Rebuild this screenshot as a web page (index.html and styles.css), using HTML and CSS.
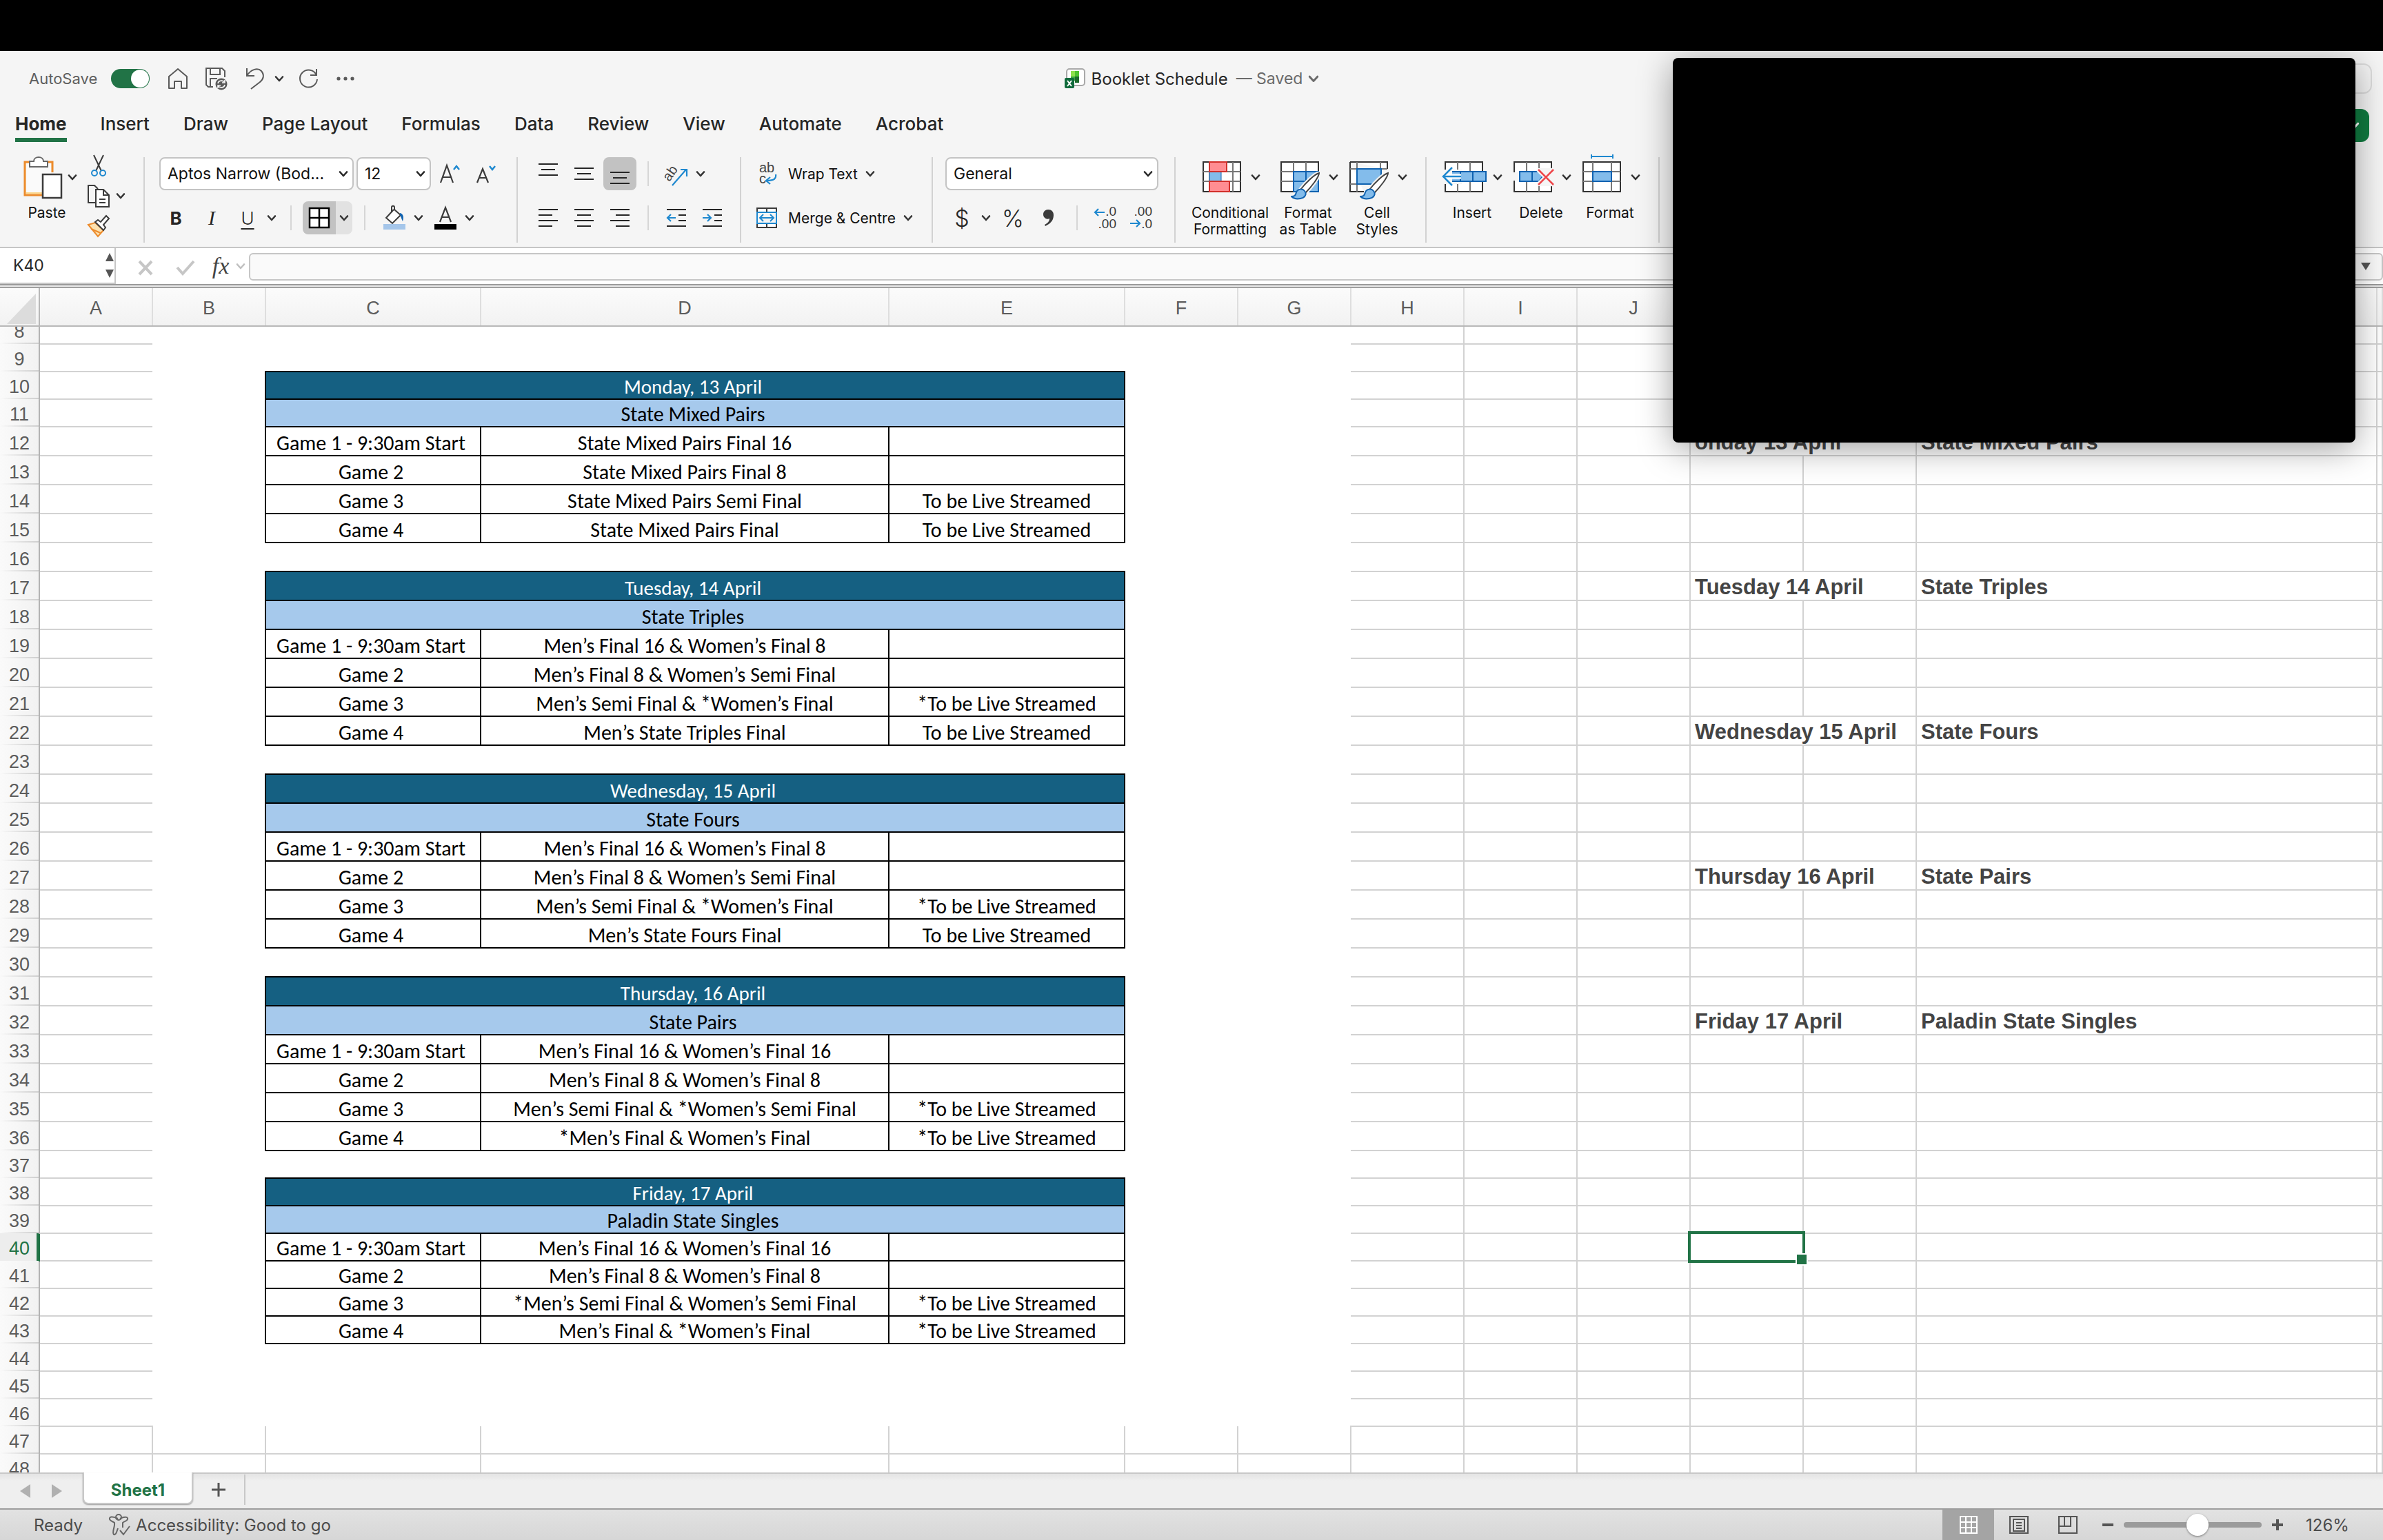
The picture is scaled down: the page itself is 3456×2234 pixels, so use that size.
FILE: index.html
```html
<!DOCTYPE html>
<html lang="en-AU">
<head>
<meta charset="utf-8">
<title>Booklet Schedule</title>
<link rel="stylesheet" href="styles.css">
</head>
<body>
<svg class="defs" aria-hidden="true">
  <symbol id="chev" viewBox="0 0 14 14"><path d="M2 4.5l5 5.5 5-5.5" fill="none" stroke="currentColor" stroke-width="2.6" stroke-linecap="round" stroke-linejoin="round"/></symbol>
  <symbol id="brush" viewBox="0 0 44 42">
    <path d="M41 2C34 4 21 17 15 25l6 6C29 23 41 8 41 2z" fill="#fff" stroke="#f5f5f5" stroke-width="6"/>
    <path d="M41 2C34 4 21 17 15 25l6 6C29 23 41 8 41 2z" fill="#fff" stroke="#444" stroke-width="2"/>
    <path d="M1 36c5 0 6-2 7-6 2-5 9-6 12-2 4 5 0 10-6 11-5 1-10 0-13-3z" fill="#83bceb" stroke="#0f62b0" stroke-width="2"/>
  </symbol>
</svg>
<div class="menubar"></div>

<header class="titlebar">
  <div class="quick">
    <label class="autosave">AutoSave <input type="checkbox" class="toggle" checked></label>
    <button class="qb" aria-label="Home"><svg width="30" height="32" viewBox="0 0 30 32"><path d="M2 13L15 2l13 11v17h-8V20H10v10H2z" fill="none" stroke="#5a5a5a" stroke-width="2" stroke-linejoin="round"/></svg></button>
    <button class="qb" aria-label="Save"><svg width="34" height="34" viewBox="0 0 34 34"><path d="M12 29H5l-3-3V2h23l4 4v9M8 2v9h14V2M8 29V17h10" fill="none" stroke="#5a5a5a" stroke-width="2"/><circle cx="24" cy="25" r="8.500" fill="#5a5a5a"/><path d="M19 24c1-5 8-5 10-1m0-4v4h-4M29 26c-1 5-8 5-10 1m0 4v-4h4" fill="none" stroke="#f5f5f5" stroke-width="1.600"/></svg></button>
    <button class="qb" aria-label="Undo"><svg width="30" height="34" viewBox="0 0 30 34"><path d="M3 2v11h11M3 13C9 3 19 1 24 6c5 6 3 12-2 16L9 32" fill="none" stroke="#5a5a5a" stroke-width="2"/></svg></button>
    <button class="cv" aria-label="Undo history"><svg width="14" height="14"><use href="#chev"/></svg></button>
    <button class="qb redo" aria-label="Redo"><svg width="30" height="32" viewBox="0 0 30 32"><path d="M27 2v9h-9M27 11A12.500 12.500 0 1 0 28 17" fill="none" stroke="#5a5a5a" stroke-width="2"/></svg></button>
    <button class="qb dots" aria-label="More"><svg width="28" height="8" viewBox="0 0 28 8"><g fill="#5a5a5a"><circle cx="4" cy="4" r="2.600"/><circle cx="14" cy="4" r="2.600"/><circle cx="24" cy="4" r="2.600"/></g></svg></button>
  </div>
  <button class="doc">
    <svg width="32" height="30" viewBox="0 0 32 30"><rect x="4" y="1" width="26" height="24" rx="4" fill="#fff" stroke="#a9a9a9" stroke-width="2"/><path d="M10 4h12v8H10z" fill="#8ee04e"/><path d="M16 4h6v8h-6z" fill="#4fc332"/><path d="M16 12h6v9h-6z" fill="#1c6b2c"/><path d="M10 12h6v6h-6z" fill="#3aa642"/><rect x="1" y="14" width="14" height="15" rx="2" fill="#0f6a3b"/><path d="M5 18l6 8M11 18l-6 8" stroke="#fff" stroke-width="2"/></svg>
    <span>Booklet Schedule</span><span class="saved">— Saved</span>
    <svg class="saved" width="16" height="16"><use href="#chev"/></svg>
  </button>
  <div class="right"><button class="search" aria-label="Search"></button></div>
</header>

<nav class="tabs">
  <button class="tab on">Home</button><button class="tab">Insert</button><button class="tab">Draw</button><button class="tab">Page Layout</button><button class="tab">Formulas</button><button class="tab">Data</button><button class="tab">Review</button><button class="tab">View</button><button class="tab">Automate</button><button class="tab">Acrobat</button>
  <button class="share" aria-label="Share"><svg width="16" height="16"><use href="#chev"/></svg></button>
</nav>

<section class="ribbon">
  <div class="group clip">
    <button class="big paste">
      <span class="pic"><svg width="64" height="70" viewBox="0 0 64 70"><path d="M22 13H11v48h26" fill="#fdf3d8" stroke="#ec8b2c" stroke-width="3"/><path d="M13 57h24" stroke="#fbd58a" stroke-width="4"/><path d="M40 13h11v15" fill="none" stroke="#ec8b2c" stroke-width="3"/><path d="M13 15h36v15H37v27H13z" fill="#fafafa"/><path d="M18 20V12h6c0-8 14-8 14 0h6v8z" fill="#fff" stroke="#666" stroke-width="2"/><rect x="37" y="31" width="27" height="34" fill="#fff" stroke="#3b3b3b" stroke-width="2.500"/></svg><svg class="c" width="14" height="14"><use href="#chev"/></svg></span>
      <span class="cap">Paste</span>
    </button>
    <div class="smallcol">
      <button aria-label="Cut"><svg width="34" height="34" viewBox="0 0 34 34"><path d="M10 2l11 23M24 2L13 25" stroke="#3b3b3b" stroke-width="2"/><circle cx="11" cy="28" r="4" fill="none" stroke="#1e88cf" stroke-width="2"/><circle cx="23" cy="28" r="4" fill="none" stroke="#1e88cf" stroke-width="2"/></svg></button>
      <button aria-label="Copy"><svg width="34" height="34" viewBox="0 0 34 34"><path d="M12 27H2V2h9l5 5" fill="none" stroke="#3b3b3b" stroke-width="2"/><path d="M13 8h11l8 8v17H13zM24 8v8h8M18 22h9M18 27h9" fill="#fff" stroke="#3b3b3b" stroke-width="2"/></svg><svg class="c" width="14" height="14"><use href="#chev"/></svg></button>
      <button aria-label="Format painter"><svg width="34" height="34" viewBox="0 0 34 34"><path d="M2 15l10-3 12 11-8 9z" fill="#fde2b0" stroke="#ec8b2c" stroke-width="2"/><path d="M6 21l14 6" stroke="#ec8b2c" stroke-width="2"/><path d="M12 11l4-3 4 3 8-9 4 4-8 9 3 4-3 4z" fill="#fff" stroke="#3b3b3b" stroke-width="2"/></svg></button>
    </div>
  </div>
  <i class="sep"></i>

  <div class="group rows font">
    <div class="row">
      <label class="combo name"><select aria-label="Font"><option>Aptos Narrow (Bod...</option></select><svg width="14" height="14"><use href="#chev"/></svg></label>
      <label class="combo size"><select aria-label="Font size"><option>12</option></select><svg width="14" height="14"><use href="#chev"/></svg></label>
      <button class="ib" aria-label="Increase font size"><svg width="34" height="34" viewBox="0 0 34 34"><path d="M3 30L12 5l9 25M6 22h12" fill="none" stroke="#3b3b3b" stroke-width="2.200"/><path d="M22 11l4-5 4 5" fill="none" stroke="#1e88cf" stroke-width="2.500"/></svg></button>
      <button class="ib" aria-label="Decrease font size"><svg width="34" height="34" viewBox="0 0 34 34"><path d="M4 30l8-20 8 20M7 23h10" fill="none" stroke="#3b3b3b" stroke-width="2.200"/><path d="M22 6l4 5 4-5" fill="none" stroke="#1e88cf" stroke-width="2.500"/></svg></button>
    </div>
    <div class="row">
      <button class="ib bold">B</button><button class="ib ital">I</button><button class="ib und">U</button><button class="cv" aria-label="Underline options"><svg width="14" height="14"><use href="#chev"/></svg></button>
      <i class="ss"></i>
      <button class="ib on join" aria-label="Borders"><svg width="32" height="32" viewBox="0 0 32 32"><path d="M2 2h28v28H2zM16 2v28M2 16h28" fill="#fff" stroke="#000" stroke-width="2.500"/></svg></button><button class="cv half" aria-label="Border options"><svg width="14" height="14"><use href="#chev"/></svg></button>
      <i class="ss"></i>
      <button class="ib" aria-label="Fill colour"><svg width="34" height="34" viewBox="0 0 34 34"><path d="M16 5l-11 12 9 8 12-12-9-8v-3c0-3-4-3-4 0v7" fill="#fff" stroke="#3b3b3b" stroke-width="2"/><path d="M25 10c5 1 6 6 4 12-2-3-2-7-4-9z" fill="#0f62b0"/><path d="M1 26h32v8H1z" fill="#a5c6ea"/></svg></button><button class="cv" aria-label="Fill options"><svg width="14" height="14"><use href="#chev"/></svg></button>
      <button class="ib" aria-label="Font colour"><svg width="34" height="34" viewBox="0 0 34 34"><path d="M9 23l8-21 8 21M12 16h10" fill="none" stroke="#3b3b3b" stroke-width="2.200"/><path d="M1 26h32v8H1z"/></svg></button><button class="cv" aria-label="Font colour options"><svg width="14" height="14"><use href="#chev"/></svg></button>
    </div>
  </div>
  <i class="sep"></i>

  <div class="group rows align">
    <div class="row">
      <button class="ib" aria-label="Top align"><svg width="28" height="32" viewBox="0 0 28 32"><path d="M0 2h28M4 10h20M0 18h28" stroke="#262626" stroke-width="2"/></svg></button>
      <button class="ib" aria-label="Middle align"><svg width="28" height="32" viewBox="0 0 28 32"><path d="M0 8h28M4 16h20M0 24h28" stroke="#262626" stroke-width="2"/></svg></button>
      <button class="ib on" aria-label="Bottom align"><svg width="28" height="32" viewBox="0 0 28 32"><path d="M0 14h28M4 22h20M0 30h28" stroke="#262626" stroke-width="2"/></svg></button>
      <i class="ss"></i>
      <button class="ib" aria-label="Orientation"><svg width="40" height="40" viewBox="-2 -3 40 40"><text x="2" y="26" transform="rotate(-55 8 22)" class="gl">ab</text><path d="M12 34L32 11M24 11h9v10" fill="none" stroke="#1e88cf" stroke-width="2.200"/></svg></button><button class="cv" aria-label="Orientation options"><svg width="14" height="14"><use href="#chev"/></svg></button>
    </div>
    <div class="row">
      <button class="ib" aria-label="Align left"><svg width="28" height="28" viewBox="0 0 28 28"><path d="M0 2h28M0 10h20M0 18h28M0 26h20" stroke="#262626" stroke-width="2"/></svg></button>
      <button class="ib" aria-label="Centre"><svg width="28" height="28" viewBox="0 0 28 28"><path d="M0 2h28M4 10h20M0 18h28M4 26h20" stroke="#262626" stroke-width="2"/></svg></button>
      <button class="ib" aria-label="Align right"><svg width="28" height="28" viewBox="0 0 28 28"><path d="M0 2h28M8 10h20M0 18h28M8 26h20" stroke="#262626" stroke-width="2"/></svg></button>
      <i class="ss"></i>
      <button class="ib" aria-label="Decrease indent"><svg width="28" height="28" viewBox="0 0 28 28"><path d="M0 2h28M17 10h11M17 18h11M0 26h28" stroke="#262626" stroke-width="2"/><path d="M13 14H1M6 9l-5 5 5 5" fill="none" stroke="#1e88cf" stroke-width="2.200"/></svg></button>
      <button class="ib" aria-label="Increase indent"><svg width="28" height="28" viewBox="0 0 28 28"><path d="M0 2h28M17 10h11M17 18h11M0 26h28" stroke="#262626" stroke-width="2"/><path d="M0 14h12M7 9l5 5-5 5" fill="none" stroke="#1e88cf" stroke-width="2.200"/></svg></button>
    </div>
  </div>
  <i class="sep"></i>

  <div class="group rows wrap">
    <div class="row">
      <button class="tb"><svg width="32" height="44" viewBox="0 -5 32 44"><text x="5" y="15" class="gl">ab</text><text x="5" y="31" class="gl">c</text><path d="M29 18c1 6-2 9-13 9M21 22l-6 5 6 5" fill="none" stroke="#1e88cf" stroke-width="2.200"/></svg><span>Wrap Text</span><svg class="c" width="14" height="14"><use href="#chev"/></svg></button>
    </div>
    <div class="row">
      <button class="tb"><svg width="32" height="32" viewBox="0 0 32 32"><path d="M2 8V2h28v6M2 24v6h28v-6M16 2v6M16 24v6" fill="#fff" stroke="#3b3b3b" stroke-width="2"/><path d="M2 8h28v16H2zM6 16h20M11 11l-5 5 5 5M21 11l5 5-5 5" fill="none" stroke="#1e88cf" stroke-width="2"/></svg><span>Merge &amp; Centre</span><svg class="c" width="14" height="14"><use href="#chev"/></svg></button>
    </div>
  </div>
  <i class="sep"></i>

  <div class="group rows number">
    <div class="row"><label class="combo fmt"><select aria-label="Number format"><option>General</option></select><svg width="14" height="14"><use href="#chev"/></svg></label></div>
    <div class="row">
      <button class="ib sym">$</button><button class="cv" aria-label="Currency options"><svg width="14" height="14"><use href="#chev"/></svg></button>
      <button class="ib sym">%</button>
      <button class="ib" aria-label="Comma style"><svg width="18" height="26" viewBox="0 0 18 26"><path d="M8 1c5 0 8 3 8 8 0 8-5 13-12 16l-1-2c5-3 7-5 7-9-4 2-9-1-9-6 0-4 3-7 7-7z" fill="#3b3b3b"/></svg></button>
      <i class="ss"></i>
      <button class="ib" aria-label="Increase decimals"><svg width="36" height="44" viewBox="0 -5 36 44"><text x="34" y="14" class="dg">.0</text><text x="34" y="32" class="dg">.00</text><path d="M17 9H3M8 4L3 9l5 5" fill="none" stroke="#1e88cf" stroke-width="2.200"/></svg></button>
      <button class="ib" aria-label="Decrease decimals"><svg width="36" height="44" viewBox="0 -5 36 44"><text x="34" y="14" class="dg">.00</text><text x="34" y="32" class="dg">.0</text><path d="M2 25h14M11 20l5 5-5 5" fill="none" stroke="#1e88cf" stroke-width="2.200"/></svg></button>
    </div>
  </div>
  <i class="sep"></i>

  <div class="group styles">
    <button class="big wide">
      <span class="pic"><svg width="64" height="70" viewBox="0 0 64 70"><path d="M4 13h54v43H4z" fill="#fff" stroke="#333" stroke-width="2"/><path d="M4 27h54M4 41h54M47 13v43M13 13v43" stroke="#777" stroke-width="2"/><path d="M13 27h17v14H13z" fill="#83bceb" stroke="#0f62b0" stroke-width="1"/><path d="M13 13h25v14H13zM13 41h29v15H13z" fill="#ff8d92" stroke="#d2302b" stroke-width="2"/></svg><svg class="c" width="14" height="14"><use href="#chev"/></svg></span>
      <span class="cap">Conditional<br>Formatting</span>
    </button>
    <button class="big">
      <span class="pic"><svg width="64" height="70" viewBox="0 0 64 70"><path d="M4 13h54v43H4z" fill="#fff" stroke="#333" stroke-width="2"/><path d="M22 27h36v29H22z" fill="#83bceb"/><path d="M4 27h18M4 41h18M22 13v43M40 13v14" stroke="#777" stroke-width="2"/><path d="M22 56V27h36v29H22M22 41h36M40 27v29" fill="none" stroke="#0f62b0" stroke-width="2"/><use href="#brush" x="18" y="27" width="44" height="42"/></svg><svg class="c" width="14" height="14"><use href="#chev"/></svg></span>
      <span class="cap">Format<br>as Table</span>
    </button>
    <button class="big">
      <span class="pic"><svg width="64" height="70" viewBox="0 0 64 70"><path d="M4 13h54v10M4 13v43h20" fill="#fff" stroke="#333" stroke-width="2"/><path d="M4 23h54M4 45h20M14 13v43M48 13v10" stroke="#777" stroke-width="2"/><path d="M14 23h35v22H14z" fill="#83bceb" stroke="#0f62b0" stroke-width="2"/><use href="#brush" x="18" y="27" width="44" height="42"/></svg><svg class="c" width="14" height="14"><use href="#chev"/></svg></span>
      <span class="cap">Cell<br>Styles</span>
    </button>
  </div>
  <i class="sep"></i>

  <div class="group cells">
    <button class="big">
      <span class="pic"><svg width="64" height="70" viewBox="0 0 64 70"><path d="M4 13h54v43H4z" fill="#fff" stroke="#333" stroke-width="2"/><path d="M22 13v43M40 13v43" stroke="#777" stroke-width="2"/><path d="M0 24h28v21H0z" fill="#f5f5f5"/><path d="M14 27h49v14H14M26 27v14M44 27v14" fill="#83bceb" stroke="#0f62b0" stroke-width="2"/><path d="M1 34h26" stroke="#fff" stroke-width="7"/><path d="M27 34H2M14 21L1 34l13 13" fill="none" stroke="#1e88cf" stroke-width="2.500"/></svg><svg class="c" width="14" height="14"><use href="#chev"/></svg></span>
      <span class="cap">Insert</span>
    </button>
    <button class="big">
      <span class="pic"><svg width="64" height="70" viewBox="0 0 64 70"><path d="M4 13h54v43H4z" fill="#fff" stroke="#333" stroke-width="2"/><path d="M22 13v43M40 13v43" stroke="#777" stroke-width="2"/><path d="M0 28h10v12H0zM38 22h26v26H38z" fill="#f5f5f5"/><path d="M12 27h28l5 7-5 7H12zM30 27v14" fill="#83bceb" stroke="#0f62b0" stroke-width="2"/><path d="M39 24l22 22M61 24L39 46" stroke="#f5f5f5" stroke-width="7"/><path d="M39 24l22 22M61 24L39 46" stroke="#ee4549" stroke-width="2.500"/></svg><svg class="c" width="14" height="14"><use href="#chev"/></svg></span>
      <span class="cap">Delete</span>
    </button>
    <button class="big">
      <span class="pic"><svg width="64" height="70" viewBox="0 0 64 70"><path d="M4 13h54v43H4z" fill="#fff" stroke="#333" stroke-width="2"/><path d="M4 27h54M4 41h54M18 13v43M45 13v43" stroke="#777" stroke-width="2"/><path d="M18 27h27v14H18z" fill="#83bceb" stroke="#0f62b0" stroke-width="2"/><path d="M16 2v6M47 2v6M16 5h31" stroke="#1e88cf" stroke-width="2"/></svg><svg class="c" width="14" height="14"><use href="#chev"/></svg></span>
      <span class="cap">Format</span>
    </button>
  </div>
  <i class="sep"></i>
</section>

<section class="formula">
  <div class="namebox"><input type="text" aria-label="Name box" value="K40"><svg width="14" height="38" viewBox="0 0 14 38"><path d="M7 1l6 12H1zM7 37l6-12H1z" fill="#555"/></svg></div>
  <button class="fb" aria-label="Cancel"><svg width="24" height="24" viewBox="0 0 24 24"><path d="M3 3l18 19M21 3L3 22" stroke="#c6c6c6" stroke-width="4"/></svg></button>
  <button class="fb" aria-label="Enter"><svg width="28" height="24" viewBox="0 0 28 24"><path d="M2 12l8 9L26 3" fill="none" stroke="#c6c6c6" stroke-width="4"/></svg></button>
  <button class="fx">fx</button>
  <svg class="fxc" width="14" height="14"><use href="#chev"/></svg>
  <div class="bar"><input type="text" aria-label="Formula"><button aria-label="Expand"><svg width="14" height="12" viewBox="0 0 14 12"><path d="M0 0h14L7 11z" fill="#555"/></svg></button></div>
</section>
<div class="split"></div>

<main class="sheet">
<table>
<colgroup><col class="n"><col class="s"><col class="s"><col class="cc"><col class="cd"><col class="ce"><col class="s"><col class="s"><col class="s"><col class="s"><col class="s"><col class="s"><col class="s"><col class="cm"><col></colgroup>
<thead><tr><th class="corner"><svg width="44" height="44" viewBox="0 0 44 44"><path d="M42 0v44H0z" fill="#dcdcdc"/></svg><th>A<th>B<th>C<th>D<th>E<th>F<th>G<th>H<th>I<th>J<th>K<th>L<th>M<th></thead>
<tbody class="page">
<tr class="cut"><th><div>8</div><td><td class="f" colspan="6"><td><td><td><td><td><td><td>
<tr><th>9<td><td class="f" colspan="6"><td><td><td><td><td><td><td>
<tr><th>10<td><td class="f"><td class="c day" colspan="3">Monday, 13 April<td class="f" colspan="2"><td><td><td><td><td><td><td>
<tr><th>11<td><td class="f"><td class="c event" colspan="3">State Mixed Pairs<td class="f" colspan="2"><td><td><td><td><td><td><td>
</tbody>
<tbody class="page tall">
<tr><th>12<td><td class="f"><td class="c">Game 1 - 9:30am Start<td class="c">State Mixed Pairs Final 16<td class="c"><td class="f" colspan="2"><td><td><td><td class="k over">onday 13 April<td><td class="k">State Mixed Pairs<td>
<tr><th>13<td><td class="f"><td class="c">Game 2<td class="c">State Mixed Pairs Final 8<td class="c"><td class="f" colspan="2"><td><td><td><td><td><td><td>
<tr><th>14<td><td class="f"><td class="c">Game 3<td class="c">State Mixed Pairs Semi Final<td class="c">To be Live Streamed<td class="f" colspan="2"><td><td><td><td><td><td><td>
<tr><th>15<td><td class="f"><td class="c">Game 4<td class="c">State Mixed Pairs Final<td class="c">To be Live Streamed<td class="f" colspan="2"><td><td><td><td><td><td><td>
<tr><th>16<td><td class="f" colspan="6"><td><td><td><td><td><td><td>
<tr><th>17<td><td class="f"><td class="c day" colspan="3">Tuesday, 14 April<td class="f" colspan="2"><td><td><td><td class="k over">Tuesday 14 April<td><td class="k">State Triples<td>
<tr><th>18<td><td class="f"><td class="c event" colspan="3">State Triples<td class="f" colspan="2"><td><td><td><td><td><td><td>
<tr><th>19<td><td class="f"><td class="c">Game 1 - 9:30am Start<td class="c">Men’s Final 16 &amp; Women’s Final 8<td class="c"><td class="f" colspan="2"><td><td><td><td><td><td><td>
<tr><th>20<td><td class="f"><td class="c">Game 2<td class="c">Men’s Final 8 &amp; Women’s Semi Final<td class="c"><td class="f" colspan="2"><td><td><td><td><td><td><td>
<tr><th>21<td><td class="f"><td class="c">Game 3<td class="c">Men’s Semi Final &amp; *Women’s Final<td class="c">*To be Live Streamed<td class="f" colspan="2"><td><td><td><td><td><td><td>
<tr><th>22<td><td class="f"><td class="c">Game 4<td class="c">Men’s State Triples Final<td class="c">To be Live Streamed<td class="f" colspan="2"><td><td><td><td class="k over">Wednesday 15 April<td><td class="k">State Fours<td>
<tr><th>23<td><td class="f" colspan="6"><td><td><td><td><td><td><td>
<tr><th>24<td><td class="f"><td class="c day" colspan="3">Wednesday, 15 April<td class="f" colspan="2"><td><td><td><td><td><td><td>
<tr><th>25<td><td class="f"><td class="c event" colspan="3">State Fours<td class="f" colspan="2"><td><td><td><td><td><td><td>
<tr><th>26<td><td class="f"><td class="c">Game 1 - 9:30am Start<td class="c">Men’s Final 16 &amp; Women’s Final 8<td class="c"><td class="f" colspan="2"><td><td><td><td><td><td><td>
<tr><th>27<td><td class="f"><td class="c">Game 2<td class="c">Men’s Final 8 &amp; Women’s Semi Final<td class="c"><td class="f" colspan="2"><td><td><td><td class="k over">Thursday 16 April<td><td class="k">State Pairs<td>
<tr><th>28<td><td class="f"><td class="c">Game 3<td class="c">Men’s Semi Final &amp; *Women’s Final<td class="c">*To be Live Streamed<td class="f" colspan="2"><td><td><td><td><td><td><td>
<tr><th>29<td><td class="f"><td class="c">Game 4<td class="c">Men’s State Fours Final<td class="c">To be Live Streamed<td class="f" colspan="2"><td><td><td><td><td><td><td>
<tr><th>30<td><td class="f" colspan="6"><td><td><td><td><td><td><td>
<tr><th>31<td><td class="f"><td class="c day" colspan="3">Thursday, 16 April<td class="f" colspan="2"><td><td><td><td><td><td><td>
<tr><th>32<td><td class="f"><td class="c event" colspan="3">State Pairs<td class="f" colspan="2"><td><td><td><td class="k over">Friday 17 April<td><td class="k">Paladin State Singles<td>
<tr><th>33<td><td class="f"><td class="c">Game 1 - 9:30am Start<td class="c">Men’s Final 16 &amp; Women’s Final 16<td class="c"><td class="f" colspan="2"><td><td><td><td><td><td><td>
<tr><th>34<td><td class="f"><td class="c">Game 2<td class="c">Men’s Final 8 &amp; Women’s Final 8<td class="c"><td class="f" colspan="2"><td><td><td><td><td><td><td>
<tr><th>35<td><td class="f"><td class="c">Game 3<td class="c">Men’s Semi Final &amp; *Women’s Semi Final<td class="c">*To be Live Streamed<td class="f" colspan="2"><td><td><td><td><td><td><td>
<tr><th>36<td><td class="f"><td class="c">Game 4<td class="c">*Men’s Final &amp; Women’s Final<td class="c">*To be Live Streamed<td class="f" colspan="2"><td><td><td><td><td><td><td>
</tbody>
<tbody class="page">
<tr><th>37<td><td class="f" colspan="6"><td><td><td><td><td><td><td>
<tr><th>38<td><td class="f"><td class="c day" colspan="3">Friday, 17 April<td class="f" colspan="2"><td><td><td><td><td><td><td>
<tr><th>39<td><td class="f"><td class="c event" colspan="3">Paladin State Singles<td class="f" colspan="2"><td><td><td><td><td><td><td>
<tr><th class="cur">40<td><td class="f"><td class="c">Game 1 - 9:30am Start<td class="c">Men’s Final 16 &amp; Women’s Final 16<td class="c"><td class="f" colspan="2"><td><td><td><td class="active"><div class="select-box"></div><td><td><td>
<tr><th>41<td><td class="f"><td class="c">Game 2<td class="c">Men’s Final 8 &amp; Women’s Final 8<td class="c"><td class="f" colspan="2"><td><td><td><td><td><td><td>
<tr><th>42<td><td class="f"><td class="c">Game 3<td class="c">*Men’s Semi Final &amp; Women’s Semi Final<td class="c">*To be Live Streamed<td class="f" colspan="2"><td><td><td><td><td><td><td>
<tr><th>43<td><td class="f"><td class="c">Game 4<td class="c">Men’s Final &amp; *Women’s Final<td class="c">*To be Live Streamed<td class="f" colspan="2"><td><td><td><td><td><td><td>
<tr><th>44<td><td class="f" colspan="6"><td><td><td><td><td><td><td>
<tr><th>45<td><td class="f" colspan="6"><td><td><td><td><td><td><td>
<tr><th>46<td><td class="f" colspan="6"><td><td><td><td><td><td><td>
</tbody>
<tbody>
<tr><th>47<td><td><td><td><td><td><td><td><td><td><td><td><td><td>
<tr><th>48<td><td><td><td><td><td><td><td><td><td><td><td><td><td>
</tbody>
</table>
</main>

<footer>
  <div class="sheets">
    <button class="arrow" aria-label="Previous sheet"><svg width="16" height="20" viewBox="0 0 16 20"><path d="M15 0v20L0 10z" fill="#b0b0b0"/></svg></button>
    <button class="arrow" aria-label="Next sheet"><svg width="16" height="20" viewBox="0 0 16 20"><path d="M1 0v20l15-10z" fill="#b0b0b0"/></svg></button>
    <button class="sheettab">Sheet1</button>
    <button class="add" aria-label="Add sheet"><svg width="20" height="20" viewBox="0 0 20 20"><path d="M10 0v20M0 10h20" stroke="#555" stroke-width="3"/></svg></button>
  </div>
  <div class="status">
    <span class="ready">Ready</span>
    <button class="a11y"><svg width="32" height="32" viewBox="0 0 32 32"><path d="M14 7C6 3 1 4 2 8c1 3 5 3 7 5 1 6-4 13-1 17 3 1 4-3 6-9M17 7c8-4 12-2 11 1s-6 3-7 5v7" fill="none" stroke="#666" stroke-width="2"/><circle cx="15" cy="5" r="4" fill="none" stroke="#666" stroke-width="2"/><path d="M17 24l5 6 9-12" fill="none" stroke="#666" stroke-width="2"/></svg>Accessibility: Good to go</button>
    <div class="views">
      <button class="view on" aria-label="Normal view"><svg width="26" height="26" viewBox="0 0 26 26"><path d="M1 1h24v24H1zM9 1v24M17 1v24M1 9h24M1 17h24" fill="none" stroke="#fff" stroke-width="2"/></svg></button>
      <button class="view" aria-label="Page layout view"><svg width="28" height="26" viewBox="0 0 28 26"><path d="M1 1h26v24H1zM6 5h16v17H6zM10 10h8M10 14h8M10 18h8" fill="none" stroke="#555" stroke-width="2"/></svg></button>
      <button class="view" aria-label="Page break view"><svg width="28" height="26" viewBox="0 0 28 26"><path d="M1 1h26v24H1zM9 1v14M1 15h17V1" fill="none" stroke="#555" stroke-width="2"/></svg></button>
    </div>
    <button class="zm" aria-label="Zoom out"><svg width="16" height="16" viewBox="0 0 16 16"><path d="M0 8h16" stroke="#555" stroke-width="4"/></svg></button>
    <input type="range" class="zoom" aria-label="Zoom" min="0" max="100" value="54">
    <button class="zm" aria-label="Zoom in"><svg width="16" height="16" viewBox="0 0 16 16"><path d="M0 8h16M8 0v16" stroke="#555" stroke-width="4"/></svg></button>
    <span class="pct">126%</span>
  </div>
</footer>
<div class="window"></div>
</body>
</html>
```
FILE: styles.css
```css
* { box-sizing: border-box; }
body {
  margin: 0;
  height: 100vh;
  display: flex;
  flex-direction: column;
  overflow: hidden;
  position: relative;
  background: #f5f5f5;
  color: #262626;
  font-family: Inter, "Liberation Sans", sans-serif;
  font-size: 21px;
}
button, input, select { font: inherit; color: inherit; border: 0; background: none; margin: 0; padding: 0; }
button { display: flex; align-items: center; justify-content: center; }
svg { display: block; flex: none; overflow: visible; }
.defs { display: none; }
.menubar { height: 74px; background: #000; flex: none; }

/* title bar */
.titlebar { height: 80px; flex: none; display: grid; grid-template-columns: 1fr auto 1fr; align-items: center; }
.quick { display: flex; align-items: center; padding-left: 42px; }
.autosave { display: flex; align-items: center; gap: 20px; color: #5f5f5f; margin-right: 13px; font-size: 22px; }
.toggle { appearance: none; width: 56px; height: 28px; border-radius: 14px; background: #217346; display: flex; justify-content: flex-end; }
.toggle::before { content: ""; width: 26px; height: 26px; margin: 1px; border-radius: 50%; background: #fff; }
.qb { width: 56px; height: 40px; }
.quick .qb + .cv { margin-left: -4px; }
.redo { margin: 0 -2px 0 3px; }
.cv { width: 22px; height: 48px; color: #333; }
.doc { gap: 8px; font-size: 24px; height: 40px; }
.saved { color: #6b6b6b; font-size: 23px; }
span.saved { margin-left: 4px; }
.right { display: flex; justify-content: flex-end; padding-right: 16px; }
.search { width: 200px; height: 44px; border: 2px solid #dcdcdc; border-radius: 12px; }

/* ribbon tabs */
.tabs { height: 52px; flex: none; display: flex; gap: 49px; padding-left: 22px; align-items: stretch; font-size: 26px; }
.tab { border-bottom: 6px solid transparent; font-weight: 500; padding-top: 4px; }
.tab.on { font-weight: 700; border-bottom-color: #217346; }
.share { margin: 4px 20px 0 auto; width: 160px; background: #107c41; color: #fff; border-radius: 12px; justify-content: flex-end; padding-right: 14px; }

/* ribbon */
.ribbon { height: 154px; flex: none; display: flex; align-items: flex-start; padding-top: 16px; border-bottom: 2px solid #c6c6c6; }
.sep { width: 2px; height: 124px; margin-top: 6px; background: #d2d2d2; flex: none; }
.group { display: flex; flex: none; }
.rows { flex-direction: column; gap: 16px; padding-top: 6px; }
.row { display: flex; gap: 4px; height: 48px; align-items: center; }
.row .cv { margin-left: -4px; }
.ib { width: 48px; height: 48px; border-radius: 8px; }
.ib.on { background: #c2c2c2; }
.ib.join { border-radius: 8px 0 0 8px; }
.row .half { width: 24px; background: #e2e2e2; border-radius: 0 8px 8px 0; }
.ss { width: 2px; height: 36px; background: #d6d6d6; margin: 0 12px; }
.half + .ss { margin: 0 14px 0 13px; }
.bold { font-weight: 700; font-size: 26px; }
.ital { font-family: "Liberation Serif", serif; font-style: italic; font-size: 30px; }
.und { font-weight: 300; font-size: 26px; text-decoration: underline; text-underline-offset: 5px; text-decoration-thickness: 2px; }
.sym { font-weight: 300; font-size: 34px; }
.gl { font: 20px "Liberation Sans", sans-serif; fill: #444; }
.dg { font: 19px "Liberation Sans", sans-serif; fill: #3b3b3b; text-anchor: end; }

.combo { display: grid; height: 48px; background: #fff; border: 2px solid #c4c4c4; border-radius: 8px; align-items: center; }
.combo select { grid-area: 1 / 1; appearance: none; padding: 0 10px; height: 44px; font-size: 23px; color: #111; }
.combo svg { grid-area: 1 / 1; justify-self: end; margin-right: 6px; pointer-events: none; }
.name { width: 282px; }
.size { width: 108px; }
.fmt { width: 309px; }

.clip { width: 208px; padding-left: 24px; gap: 14px; }
.font { width: 539px; padding-left: 21px; }
.align { width: 322px; padding-left: 20px; }
.wrap { width: 276px; padding-left: 21px; }
.number { width: 350px; padding-left: 18px; }
.styles { width: 362px; padding-left: 16px; }
.cells { width: 336px; padding-left: 16px; }

.big { flex-direction: column; width: 100px; justify-content: flex-start; color: #111; }
.big.wide { width: 126px; }
.big.paste { width: 88px; }
.pic { display: flex; align-items: center; gap: 9px; }
.cap { line-height: 24px; margin-top: 5px; text-align: center; font-size: 21px; }
.c { color: #333; }
.smallcol { display: flex; flex-direction: column; gap: 8px; align-items: flex-start; }
.smallcol button { height: 36px; gap: 8px; }
.tb { gap: 15px; height: 48px; color: #111; }
.tb .c { margin-left: -4px; }

/* formula bar */
.formula { height: 52px; flex: none; display: flex; align-items: center; background: #fff; }
.namebox { width: 168px; height: 52px; display: flex; align-items: center; border: 2px solid #c6c6c6; border-top: 0; border-left: 0; font-size: 23px; }
.namebox input { flex: 1; min-width: 0; padding-left: 19px; height: 44px; }
.fb { width: 58px; height: 48px; margin-top: 4px; }
.fb:first-of-type { margin-left: 14px; }
.fx { width: 44px; font: italic 34px "Liberation Serif", serif; color: #444; height: 48px; }
.fxc { color: #c0c0c0; margin-right: 5px; }
.bar { flex: 1; display: flex; height: 40px; margin-top: 2px; background: #fafafa; border: 2px solid #c6c6c6; border-radius: 6px; }
.bar input { flex: 1; padding: 0 10px; }
.bar button { width: 46px; }
.split { height: 6px; flex: none; background: #e9e9e9; border-top: 2px solid #9b9b9b; border-bottom: 2px solid #a0a0a0; }

/* worksheet grid */
.sheet { flex: 1; min-height: 0; overflow: hidden; background: #fff; }
table { width: 100%; table-layout: fixed; border-collapse: collapse; }
.n { width: 57px; } .s { width: 164px; } .cc { width: 312px; } .cd { width: 592px; } .ce { width: 342px; } .cm { width: 668px; }
th, td { padding: 0; white-space: nowrap; vertical-align: bottom; line-height: 36px; }
th { font: 27px/36px "Liberation Sans", sans-serif; color: #5c5c5c; }
thead th { height: 55px; padding-top: 3px; vertical-align: middle; background: linear-gradient(#fbfbfb, #f2f2f2); border-right: 2px solid #dedede; border-bottom: 2px solid #b8b8b8; }
thead .corner { border-right-color: #b8b8b8; }
.corner svg { margin: 2px 0 0 10px; }
tr { height: 40px; }
.tall tr { height: 42px; }
tbody th { border-right: 2px solid #b4b4b4; background: linear-gradient(to right, transparent, #cfcfcf) bottom / 100% 2px no-repeat, linear-gradient(to right, #fafafa, #f2f2f2); }
tbody th.cur { color: #217346; background: #ededed; border-right-color: #217346; box-shadow: inset -3px 0 #217346; }
tbody tr.cut { height: 26px; }
.cut div { height: 25px; display: flex; align-items: flex-end; justify-content: center; overflow: hidden; }
.cut td { line-height: 20px; }
td { border-right: 2px solid #d2d2d2; border-bottom: 2px solid #d2d2d2; }
.page td:nth-child(2) { border-right: 0; }
.page td.f { border: 0; }
td.c { border: 2px solid #000; text-align: center; font-family: Carlito, Lato, sans-serif; font-size: 30px; line-height: 34px; color: #000; padding-right: 6px; }
td.c + td.c { padding-right: 0; }
td.day { background: #156082; color: #fff; font-size: 29px; }
td.event { background: #a6c9ec; }
td.k { font: bold 31px/36px "Liberation Sans", sans-serif; color: #444; padding-left: 6px; }
td.over { border-right: 0; }
.active { position: relative; }
.select-box { position: absolute; inset: -4px; border: 4px solid #217346; }
.select-box::after { content: ""; position: absolute; right: -8px; bottom: -8px; width: 14px; height: 14px; background: #217346; border: 2px solid #fff; }

/* sheet tabs and status bar */
footer { flex: none; }
.sheets { height: 52px; display: flex; align-items: flex-start; background: linear-gradient(#e4e4e4, #efefef 10px); border-top: 2px solid #c8c8c8; padding-left: 14px; }
.arrow { width: 45px; height: 50px; }
.sheettab { width: 160px; height: 46px; margin: -2px 0 0 16px; background: #fff; color: #217346; font-weight: 700; font-size: 24px; border: 2px solid #c8c8c8; border-top: 0; border-radius: 0 0 8px 8px; box-shadow: 0 1px 2px #999; padding-top: 6px; }
.add { width: 76px; height: 44px; border-right: 2px solid #c8c8c8; margin-top: 1px; }
.status { height: 46px; display: flex; align-items: center; border-top: 2px solid #9e9e9e; background: linear-gradient(#e2e2e2, #d6d6d6); color: #4c4c4c; font-size: 24px; padding: 0 48px 0 49px; }
.a11y { gap: 8px; margin-left: 37px; }
.views { display: flex; margin-left: auto; }
.view { width: 71px; height: 44px; }
.view.on { background: #a4a4a4; width: 75px; }
.zm { margin: 0 15px; width: 16px; }
.zoom { appearance: none; width: 200px; height: 32px; }
.zoom::-webkit-slider-runnable-track { height: 8px; border-radius: 4px; background: #9b9b9b; }
.zoom::-webkit-slider-thumb { appearance: none; width: 32px; height: 32px; margin-top: -12px; border-radius: 50%; background: #fff; box-shadow: 0 1px 3px #777; }
.pct { width: 64px; margin-left: 18px; }

/* floating window over the workbook */
.window { position: absolute; top: 84px; right: 40px; width: 990px; height: 558px; border-radius: 8px; background: #000; box-shadow: 0 8px 50px rgba(0, 0, 0, .38); }
```
